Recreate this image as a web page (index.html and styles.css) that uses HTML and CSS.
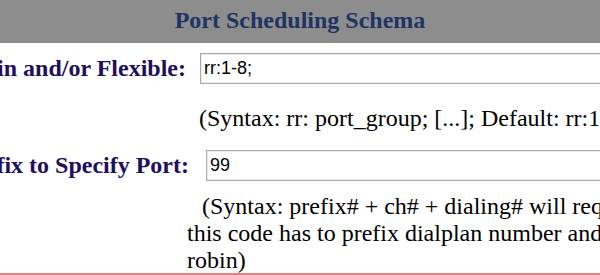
FILE: index.html
```html
<!DOCTYPE html>
<html lang="en">
<head>
<meta charset="utf-8">
<title>Port Scheduling Schema</title>
<link rel="stylesheet" href="styles.css">
</head>
<body>
  <div class="header">Port Scheduling Schema</div>
  <div class="form">
    <div class="row row-1">
      <div class="label"><span>Round Robin and/or Flexible:</span></div>
      <div class="field"><input class="input" type="text" value="rr:1-8;"></div>
    </div>
    <div class="hint hint-1">(Syntax: rr: port_group; [...]; Default: rr:1-8)</div>
    <div class="row row-2">
      <div class="label"><span>Prefix to Specify Port:</span></div>
      <div class="field"><input class="input" type="text" value="99"></div>
    </div>
    <div class="hint hint-2">(Syntax: prefix# + ch# + dialing# will request the specified port;<br>this code has to prefix dialplan number and cannot be used with round<br>robin)</div>
  </div>
  <div class="bottom-rule"></div>
</body>
</html>
```
FILE: styles.css
```css
html, body {
  margin: 0;
  padding: 0;
  overflow: hidden;
  background: #ffffff;
}

body {
  font-family: "Liberation Serif", "Times New Roman", serif;
  color: #000000;
  width: 600px;
  height: 275px;
}

.header {
  height: 43px;
  line-height: 41px;
  background: #8d8d8d;
  color: #1e3462;
  font-weight: bold;
  font-size: 24px;
  text-align: center;
}

.form {
  display: flex;
  flex-direction: column;
}

.row {
  display: flex;
  align-items: center;
  height: 31px;
}

.row-1 {
  margin-top: 10px;
}

.row-2 {
  margin-top: 18px;
}

.label {
  display: flex;
  justify-content: flex-end;
  overflow: hidden;
  white-space: nowrap;
  font-weight: bold;
  font-size: 24px;
  color: #1f0f5c;
  flex: none;
}

.row-1 .label {
  width: 186px;
}

.row-1 .field {
  padding-left: 14px;
}

.row-2 .label {
  width: 189px;
}

.row-2 .field {
  padding-left: 17px;
}

.input {
  box-sizing: border-box;
  width: 520px;
  height: 31px;
  margin: 0;
  padding: 0 0 0 3px;
  border: 1px solid #a9a9a9;
  box-shadow: inset 0 0 0 1px #ececec;
  font-family: "Liberation Sans", Arial, sans-serif;
  font-size: 18px;
  color: #000000;
  background: #ffffff;
  outline: none;
}

.hint {
  font-size: 24px;
  white-space: nowrap;
}

.hint-1 {
  margin-top: 21px;
  padding-left: 199px;
}

.hint-2 {
  margin-top: 12px;
  padding-left: 187px;
  text-indent: 15px;
}

.bottom-rule {
  position: fixed;
  left: 0;
  right: 0;
  bottom: 0;
  height: 2px;
  background: #e08383;
}
```
